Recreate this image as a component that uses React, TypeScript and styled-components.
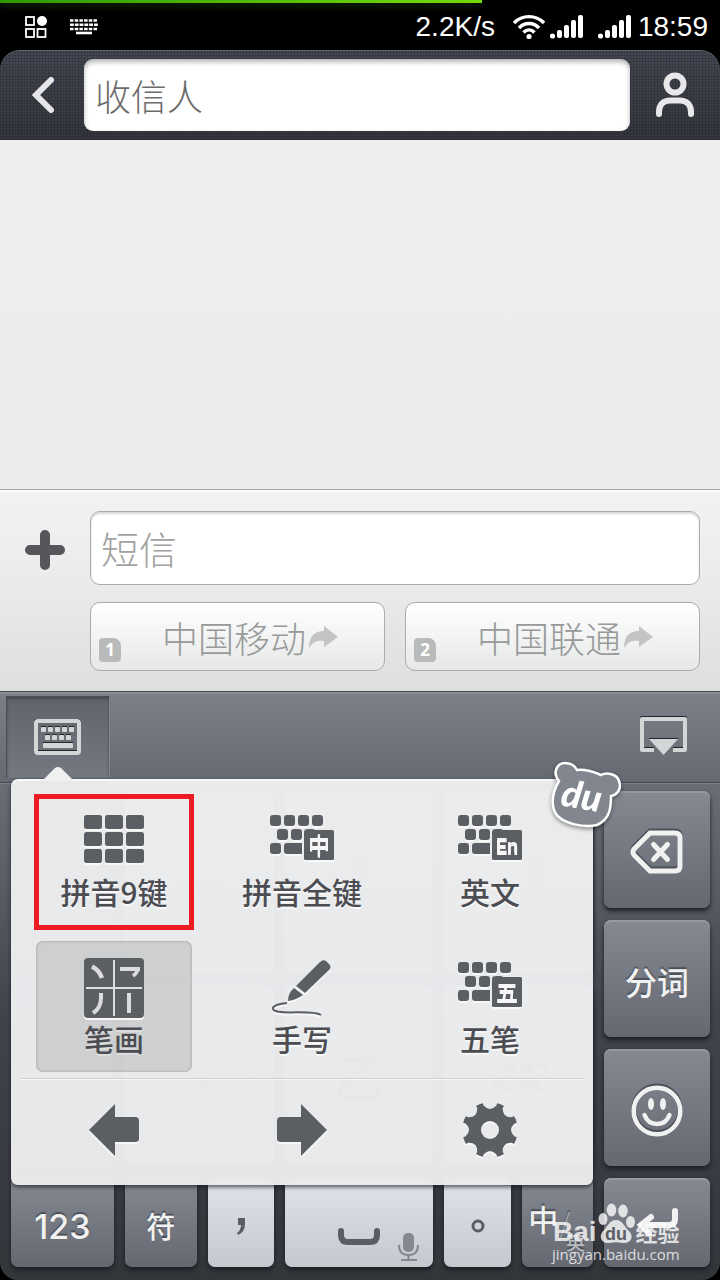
import React from "react";
import styled, { createGlobalStyle, css } from "styled-components";

const GlobalStyle = createGlobalStyle`
  *, *::before, *::after { box-sizing: border-box; }
  body { margin: 0; background: #000; font-family: "Noto Sans CJK SC", sans-serif; }
  button { margin: 0; padding: 0; border: 0; background: none; color: inherit; font-family: inherit; cursor: pointer; }
  input { font-family: inherit; min-width: 0; outline: none; }
  svg { display: block; flex: none; }
`;

const Page = styled.div`
  display: flex;
  flex-direction: column;
  min-height: 100vh;
  overflow: hidden;
`;

/* ---------- status bar ---------- */

const StatusBar = styled.div`
  position: relative;
  display: flex;
  align-items: center;
  justify-content: space-between;
  height: 50px;
  padding: 4px 12px 0 25px;
  background: #000;
  color: #fff;
  font: 400 28px/40px "Liberation Sans", sans-serif;
`;

const Progress = styled.div`
  position: absolute;
  left: 0;
  top: 0;
  width: 67%;
  height: 3px;
  background: linear-gradient(90deg, #2f9800, #74dc0c);
  box-shadow: 0 3px 6px rgba(60, 140, 0, 0.4);
`;

const StatusGroup = styled.div<{ $gap: number }>`
  display: flex;
  align-items: center;
  gap: ${(p) => p.$gap}px;
`;

const Speed = styled.span`
  margin-right: 12px;
`;

/* ---------- header ---------- */

const Header = styled.header`
  display: flex;
  align-items: center;
  height: 90px;
  padding: 1px 0 2px;
  border-top: 1px solid #60646b;
  border-radius: 20px 20px 0 0;
  background:
    repeating-linear-gradient(0deg, rgba(20, 22, 28, 0.22) 0 1px, transparent 1px 3px),
    repeating-linear-gradient(90deg, rgba(20, 22, 28, 0.22) 0 1px, transparent 1px 3px),
    linear-gradient(#444852, #34363c);
`;

const HeaderButton = styled.button<{ $width: number }>`
  display: flex;
  align-items: center;
  justify-content: center;
  width: ${(p) => p.$width}px;
  height: 72px;
`;

const Recipient = styled.input`
  flex: 1;
  height: 72px;
  padding: 0 12px 0 11px;
  border: 0;
  border-radius: 9px;
  background: #fff;
  box-shadow: inset 0 3px 5px rgba(0, 0, 0, 0.3);
  font-size: 36px;
  font-weight: 300;
  &::placeholder { color: #6c6c6c; opacity: 1; }
`;

const Conversation = styled.main`
  flex: 1;
  background: linear-gradient(#efefef, #ebebeb);
`;

/* ---------- composer ---------- */

const Composer = styled.form`
  display: grid;
  grid-template-columns: 90px 1fr;
  row-gap: 17px;
  padding: 21px 20px 20px 0;
  border-top: 1px solid #a6a8a8;
  background: linear-gradient(#f1f3f2, #ececec 40%, #dddfe0);
  box-shadow: inset 0 2px #fafafa;
`;

const AddButton = styled.button`
  display: flex;
  align-items: center;
  justify-content: center;
  padding-top: 4px;
`;

const MessageInput = styled.input`
  height: 74px;
  padding: 0 10px 2px;
  border: 1px solid #a9abac;
  border-radius: 10px;
  background: #fff;
  box-shadow: inset 0 2px 2px rgba(0, 0, 0, 0.15);
  font-size: 38px;
  font-weight: 300;
  &::placeholder { color: #a2a2a2; opacity: 1; }
`;

const SendRow = styled.div`
  grid-column: 2;
  display: grid;
  grid-template-columns: 1fr 1fr;
  gap: 20px;
`;

const SendButton = styled.button`
  display: flex;
  align-items: center;
  height: 69px;
  padding: 0 45px 0 8px;
  border: 1px solid #a9abac;
  border-radius: 10px;
  background: linear-gradient(#fff, #e6e8e7);
  color: #989a9a;
  font-size: 36px;
  font-weight: 300;
  line-height: 48px;
`;

const SendLabel = styled.span`
  flex: 1;
  display: flex;
  align-items: center;
  justify-content: flex-end;
  gap: 3px;
  white-space: nowrap;
`;

const SimBadge = styled.span`
  align-self: flex-end;
  width: 22px;
  height: 24px;
  margin-bottom: 8px;
  border-radius: 4px 8px 4px 4px;
  background: #b9bbbb;
  color: #fff;
  font: 700 17px/24px "Noto Sans", sans-serif;
  text-align: center;
`;

/* ---------- keyboard ---------- */

const Keyboard = styled.section`
  position: relative;
  border-top: 1px solid #484e50;
  border-radius: 0 0 18px 18px;
  background: linear-gradient(#6a6e77 80px, #5b5f68 180px, #41444b 320px, #32353a);
`;

const Toolbar = styled.div`
  display: flex;
  justify-content: space-between;
  height: 91px;
  padding: 2px 28px 4px 6px;
  border-top: 2px solid #879092;
  border-bottom: 1px solid #454951;
  background: linear-gradient(#7b7f87, #656971);
`;

const LayoutTab = styled.button`
  display: flex;
  justify-content: center;
  width: 104px;
  padding: 22px 2px 0 0;
  border: 1px solid #4b5059;
  border-right-color: #80858e;
  border-bottom: 0;
  background: linear-gradient(#60646c, #747881);
  box-shadow: inset 0 2px 3px rgba(50, 53, 60, 0.6);
`;

const HideButton = styled.button`
  display: flex;
  justify-content: center;
  padding-top: 20px;
  width: 56px;
`;

const Board = styled.div`
  display: flex;
  gap: 11px;
  padding: 7px 10px 13px 11px;
  border-top: 1px solid #7c8089;
`;

const MainKeys = styled.div`
  flex: 1;
  display: flex;
  flex-direction: column;
  gap: 12px;
`;

const StrokeKeys = styled.div`
  flex: 1;
  display: grid;
  grid-template-columns: 103fr 149fr 149fr 149fr;
  grid-template-rows: 1fr 1fr;
  gap: 12px 11px;
`;

const PunctuationList = styled.div`
  grid-row: 1 / 3;
  display: grid;
  grid-template-rows: repeat(4, 1fr);
  border-radius: 7px;
  background: #7b7f88;
`;

const BottomKeys = styled.div`
  display: grid;
  grid-template-columns: 103fr 72fr 66fr 149fr 67fr 71fr;
  gap: 11px;
`;

const SideKeys = styled.div`
  display: flex;
  flex-direction: column;
  gap: 12px;
  width: 106px;
`;

const Key = styled.button<{ $light?: boolean; $height?: number; $size?: number }>`
  position: relative;
  display: flex;
  align-items: center;
  justify-content: center;
  min-width: 0;
  ${(p) => p.$height && css`height: ${p.$height}px;`}
  border-radius: 7px;
  font-size: ${(p) => p.$size ?? 32}px;
  font-weight: 500;
  white-space: nowrap;
  ${(p) =>
    p.$light
      ? css`
          color: #5a5d66;
          background: linear-gradient(#e0e3ea, #c5c8cf);
          box-shadow: 0 3px 4px #1d1f23;
        `
      : css`
          color: #f1f1f1;
          background: linear-gradient(#858991, #656870);
          box-shadow: inset 0 2px #9599a2, 0 3px 4px #1d1f23;
          text-shadow: 0 -2px 1px #4c5058;
        `}
`;

const PlainKey = styled.button`
  color: #fff;
  font-size: 32px;
`;

const NumberLabel = styled.span`
  font: 500 34px/40px Inter, sans-serif;
  padding-top: 8px;
`;

const KeyLabel = styled.span`
  padding-top: 4px;
`;

const ModeLabel = styled.span`
  flex: 1;
  display: flex;
  align-items: center;
  height: 80px;
  padding: 0 8px 0 6px;
  font-size: 30px;
  line-height: 30px;
`;

const ModeMain = styled.span`
  padding-bottom: 10px;
`;

const ModeSlash = styled.span`
  margin-right: -4px;
  color: #a4a7ad;
  font-weight: 300;
`;

const ModeAlt = styled.span`
  display: flex;
  align-items: center;
  color: #b9bcc1;
  font-size: 19px;
  line-height: 24px;
  padding-top: 38px;
`;

const MicBadge = styled.span`
  position: absolute;
  right: 14px;
  bottom: 6px;
`;

/* ---------- layout picker ---------- */

const Picker = styled.div`
  position: absolute;
  top: 87px;
  left: 11px;
  right: 127px;
  padding: 15px 9px 0;
  border-top: 2px solid #f8f8f8;
  border-radius: 7px;
  background: linear-gradient(rgba(236, 236, 236, 0.98), rgba(233, 235, 237, 0.98) 50%, rgba(234, 234, 235, 0.98));
  box-shadow: 0 2px 4px rgba(20, 22, 28, 0.7);
  color: #4b4d53;
`;

const Caret = styled.svg`
  position: absolute;
  top: -14px;
  left: 31px;
`;

const Bear = styled.svg`
  position: absolute;
  top: -20px;
  right: -30px;
  filter: drop-shadow(0 2px 2px rgba(0, 0, 0, 0.4));
`;

const LayoutGrid = styled.div`
  display: grid;
  grid-template-columns: repeat(3, 1fr);
  row-gap: 16px;
  padding-bottom: 6px;
  margin-top: -2px;
`;

const LayoutOption = styled.button<{ $selected?: boolean }>`
  position: relative;
  display: flex;
  flex-direction: column;
  align-items: center;
  height: 131px;
  margin: 0 16px;
  padding-top: 15px;
  border-radius: 7px;
  font-size: 30px;
  font-weight: 500;
  line-height: 36px;
  white-space: nowrap;
  text-shadow: 0 2px #f8f8f8;
  ${(p) =>
    p.$selected &&
    css`
      background: rgba(190, 190, 190, 0.6);
      box-shadow: inset 0 0 3px #999;
      text-shadow: 0 2px #dcdcdc;
    `}
`;

const IconBox = styled.span`
  display: flex;
  align-items: center;
  justify-content: center;
  height: 64px;
  filter: drop-shadow(0 2px 0 #f8f8f8);
`;

const Highlight = styled.span`
  position: absolute;
  inset: 0 -2px -5px;
  border: 5px solid #ed1c24;
`;

const PickerFooter = styled.div`
  display: grid;
  grid-template-columns: repeat(3, 1fr);
  height: 107px;
  padding-bottom: 5px;
  border-top: 1px solid #d2d2d2;
  box-shadow: inset 0 1px #f6f6f6;
`;

const FooterButton = styled.button`
  display: flex;
  align-items: center;
  justify-content: center;
  filter: drop-shadow(0 2px 0 #f8f8f8);
`;

/* ---------- watermark ---------- */

const Watermark = styled.div`
  position: absolute;
  right: 38px;
  bottom: 17px;
  width: 130px;
  color: rgba(255, 255, 255, 0.78);
  white-space: nowrap;
  pointer-events: none;
`;

const WatermarkLogo = styled.div`
  display: flex;
  align-items: flex-end;
  gap: 1px;
  padding-left: 1px;
  font: 700 28px/26px "Liberation Sans", sans-serif;
`;

const WatermarkWord = styled.span`
  font: 700 22px/28px "Noto Sans CJK SC", sans-serif;
`;

const WatermarkUrl = styled.div`
  font: 400 15px/18px "Open Sans", sans-serif;
`;

/* ---------- icons ---------- */

const INK = "#5b5e63";

const Signal = () => (
  <svg width="34" height="24" viewBox="0 0 34 24" fill="#fff">
    <circle cx="2.5" cy="21" r="2.6" />
    <rect x="7" y="15" width="5" height="8" rx="2" />
    <rect x="14" y="10" width="5" height="13" rx="2" />
    <rect x="21" y="5" width="5" height="18" rx="2" />
    <rect x="28" y="0" width="5" height="23" rx="2" />
  </svg>
);

const Wifi = () => (
  <svg width="32" height="26" viewBox="0 0 32 26" fill="none" stroke="#fff" strokeWidth="3.4">
    <path d="M1 9C9 0.500 23 0.500 31 9" />
    <path d="M6 14C11.500 8 20.500 8 26 14" />
    <path d="M10.500 18.500C13.800 15 18.200 15 21.500 18.500" />
    <circle cx="16" cy="22.500" r="2.600" fill="#fff" stroke="none" />
  </svg>
);

const AppsIcon = () => (
  <svg width="22" height="22" viewBox="0 0 22 22" fill="none" stroke="#fff" strokeWidth="1.800">
    <rect x="1" y="1" width="8" height="8" />
    <circle cx="17" cy="5" r="5" fill="#fff" stroke="none" />
    <rect x="1" y="13" width="8" height="8" />
    <rect x="12.500" y="13" width="8" height="8" />
  </svg>
);

const MiniKeyboard = () => (
  <svg width="30" height="16" viewBox="0 0 30 16" fill="none" stroke="#fff" strokeWidth="2.600">
    <path d="M1 1.500H29M1 10H29" strokeDasharray="3.500 1.200" />
    <path d="M1 5.700H29" strokeDasharray="3.800 1" />
    <path d="M7 14H23" />
  </svg>
);

const MiniKeys = ({ glyph, latin }: { glyph: string; latin?: boolean }) => (
  <svg width="64" height="52" viewBox="0 0 64 52" fill={INK}>
    {[0, 14, 28, 42].map((x) => (
      <rect key={x} x={x} y="0" width="11" height="11" rx="3" />
    ))}
    <rect x="7" y="14" width="11" height="11" rx="3" />
    <rect x="21" y="14" width="11" height="11" rx="3" />
    <path d="M34 15Q36 14 39 14H43L45 15Z" />
    <rect x="0" y="28" width="11" height="11" rx="3" />
    <path d="M17 28H32V39H17Q14 39 14 36V31Q14 28 17 28Z" />
    <rect x="34" y="15" width="30" height="30" rx="1.500" />
    <text
      x="49"
      y="38"
      fill="#f6f6f6"
      fontSize={latin ? 20 : 22}
      fontWeight={latin ? 600 : 500}
      fontFamily={latin ? "Roboto, sans-serif" : '"Noto Sans CJK SC", sans-serif'}
      textAnchor="middle"
    >
      {glyph}
    </text>
  </svg>
);

const NineKeys = () => (
  <svg width="60" height="52" viewBox="0 0 60 52" fill={INK}>
    {[0, 17, 34].map((y) =>
      [0, 21, 42].map((x) => <rect key={`${x}-${y}`} x={x} y={y} width="18" height="14" rx="2.500" />)
    )}
  </svg>
);

const StrokeIcon = () => (
  <svg width="60" height="60" viewBox="0 0 60 60">
    <rect width="60" height="60" rx="4" fill={INK} />
    <g fill="none" stroke="#dcdcde">
      <path d="M30 2V58M2 30H58" strokeWidth="2" />
      <path d="M8 8.500Q15 12 18 20" strokeWidth="4.500" />
      <path d="M36 11H56" strokeWidth="4" />
      <path d="M54 11Q53 15 49 18" strokeWidth="3.500" />
      <path d="M17 35V40Q17 50 9 55" strokeWidth="4" />
      <path d="M45 35V55" strokeWidth="4" />
    </g>
  </svg>
);

const PenIcon = () => (
  <svg width="60" height="58" viewBox="0 0 60 58">
    <path d="M24 27L48 3Q51 0 54 2L57 5Q60 8 57 11L33 34Z" fill={INK} />
    <path d="M22 29L31 36Q24 41 16 42Q16 34 22 29Z" fill={INK} />
    <path d="M15 44C4 45 0 48 1 50C3 57 40 50 49 56" fill="none" stroke={INK} strokeWidth="2" />
  </svg>
);

const ArrowLeft = () => (
  <svg width="50" height="52" viewBox="0 0 50 52" fill={INK}>
    <path d="M0 26L26 0V13H46Q50 13 50 17V35Q50 38 46 38H26V52Z" />
  </svg>
);

const ArrowRight = () => (
  <svg width="50" height="52" viewBox="0 0 50 52" fill={INK}>
    <path d="M50 26L24 0V13H4Q0 13 0 17V35Q0 38 4 38H24V52Z" />
  </svg>
);

const Gear = () => (
  <svg width="56" height="56" viewBox="-28 -28 56 56">
    <defs>
      <mask id="gear-notches">
        <rect x="-28" y="-28" width="56" height="56" fill="#fff" />
        <circle r="9" fill="#000" />
        {[0, 45, 90, 135, 180, 225, 270, 315].map((a) => (
          <path key={a} d="M-7.500 -29L-6.500 -24.500Q0 -17.500 6.500 -24.500L7.500 -29Z" fill="#000" transform={`rotate(${a})`} />
        ))}
      </mask>
    </defs>
    <circle r="27.800" fill={INK} mask="url(#gear-notches)" />
  </svg>
);

const SendArrow = () => (
  <svg width="30" height="24" viewBox="0 0 30 24" fill="#c3c4c4">
    <path d="M0 23C0 11 6 6 15 6V1L29 12L15 22V16C8 15 4 17 0 23Z" />
  </svg>
);

const BaiduBear = () => (
  <Bear width="72" height="70" viewBox="0 0 72 70" aria-hidden="true">
    <path
      d="M8 20C1 12 6 2 14 2C20 2 24 5 26 9C34 8 43 11 50 14C56 11 66 13 68 20C71 28 66 34 60 35C60 47 59 58 46 64C34 67 12 63 5 53C-1 43 2 30 8 20Z"
      fill="#82868e"
      stroke="#fff"
      strokeWidth="2.500"
    />
    <text
      x="30"
      y="48"
      fill="#fff"
      fontFamily="Lato, sans-serif"
      fontSize="37"
      fontWeight="900"
      fontStyle="italic"
      textAnchor="middle"
      transform="rotate(10 31 40)"
    >
      du
    </text>
  </Bear>
);

const Paw = () => (
  <svg width="37" height="42" viewBox="0 0 37 42" fill="currentColor">
    <ellipse cx="5" cy="16" rx="4.500" ry="6" />
    <ellipse cx="13.500" cy="7" rx="4.800" ry="6.500" />
    <ellipse cx="25" cy="8" rx="4.800" ry="6.500" />
    <ellipse cx="32.500" cy="19" rx="4.500" ry="6" />
    <path d="M18 17C25 17 26 24 31 28C37 34 32 41 25 40C20 39 16 39 11 40C4 41 0 34 5 28C10 24 11 17 18 17Z" />
    <text
      x="18"
      y="37"
      fill="#5a5d64"
      fontFamily='"Liberation Sans", sans-serif'
      fontSize="18"
      fontWeight="700"
      textAnchor="middle"
    >
      du
    </text>
  </svg>
);

const Stroke = ({ d }: { d: string }) => (
  <svg width="52" height="52" viewBox="0 0 52 52" fill="none" stroke="#8a8d94" strokeWidth="7">
    <path d={d} />
  </svg>
);

const strokes = [
  { name: "横", label: <Stroke d="M4 30H48" /> },
  { name: "竖", label: <Stroke d="M26 2V50" /> },
  { name: "撇", label: <Stroke d="M42 2V20Q40 42 22 50" /> },
  { name: "点", label: <Stroke d="M14 14Q28 24 32 38" /> },
  { name: "折", label: "乙" },
  { name: "通配", label: "通配" },
];
const marks = ["?", "!", "~", "……"];

const carriers = [
  { sim: 1, name: "中国移动" },
  { sim: 2, name: "中国联通" },
];

const layouts = [
  { name: "拼音9键", icon: <NineKeys />, highlighted: true },
  { name: "拼音全键", icon: <MiniKeys glyph="中" /> },
  { name: "英文", icon: <MiniKeys glyph="En" latin /> },
  { name: "笔画", icon: <StrokeIcon />, selected: true },
  { name: "手写", icon: <PenIcon /> },
  { name: "五笔", icon: <MiniKeys glyph="五" /> },
];

export default function App() {
  return (
    <Page>
      <GlobalStyle />
      <StatusBar>
        <Progress />
        <StatusGroup $gap={22}>
          <AppsIcon />
          <MiniKeyboard />
        </StatusGroup>
        <StatusGroup $gap={6}>
          <Speed>2.2K/s</Speed>
          <StatusGroup $gap={5}>
            <Wifi />
            <StatusGroup $gap={14}>
              <Signal />
              <Signal />
            </StatusGroup>
          </StatusGroup>
          <span>18:59</span>
        </StatusGroup>
      </StatusBar>

      <Header>
        <HeaderButton $width={84} type="button" aria-label="返回">
          <svg width="24" height="36" viewBox="0 0 24 36" fill="none">
            <path d="M21 3L6 18L21 33" stroke="#e6e6e8" strokeWidth="6" strokeLinecap="round" />
          </svg>
        </HeaderButton>
        <Recipient placeholder="收信人" aria-label="收信人" />
        <HeaderButton $width={90} type="button" aria-label="联系人">
          <svg width="38" height="46" viewBox="0 0 38 46" fill="none" stroke="#e8e8ea" strokeWidth="6">
            <circle cx="19" cy="12" r="8.500" />
            <path d="M3 42V40C3 32 8 28.500 14 28.500H24C30 28.500 35 32 35 40V42" strokeLinecap="round" />
          </svg>
        </HeaderButton>
      </Header>

      <Conversation />

      <Composer onSubmit={(e) => e.preventDefault()}>
        <AddButton type="button" aria-label="添加附件">
          <svg width="40" height="40" viewBox="0 0 40 40" stroke="#55575b" strokeWidth="10" strokeLinecap="round">
            <path d="M20 5V35M5 20H35" />
          </svg>
        </AddButton>
        <MessageInput placeholder="短信" aria-label="短信" />
        <SendRow>
          {carriers.map((c) => (
            <SendButton key={c.sim} type="submit">
              <SimBadge>{c.sim}</SimBadge>
              <SendLabel>
                {c.name}
                <SendArrow />
              </SendLabel>
            </SendButton>
          ))}
        </SendRow>
      </Composer>

      <Keyboard>
        <Toolbar>
          <LayoutTab type="button" aria-label="键盘布局">
            <svg width="47" height="36" viewBox="0 0 47 36">
              <rect x="2" y="1" width="43" height="32" rx="2" fill="none" stroke="#23252a" strokeWidth="4" />
              <rect x="2" y="2" width="43" height="32" rx="2" fill="none" stroke="#d4d5d7" strokeWidth="4" />
              <g fill="#d4d5d7" stroke="none">
                {[7, 14, 21, 28, 35].map((x) => (
                  <rect key={x} x={x} y="8" width="5" height="5" rx="1" />
                ))}
                {[11, 18, 25, 32].map((x) => (
                  <rect key={x} x={x} y="16" width="5" height="5" rx="1" />
                ))}
                <rect x="9" y="24" width="30" height="5" rx="1" />
              </g>
              <path d="M7 7.500H12M14 7.500H19M21 7.500H26M28 7.500H33M35 7.500H40M11 15.500H16M18 15.500H23M25 15.500H30M32 15.500H37M9 23.500H39" stroke="#23252a" />
            </svg>
          </LayoutTab>
          <HideButton type="button" aria-label="收起键盘">
            <svg width="48" height="40" viewBox="0 0 48 40">
              <path d="M14 33H2V2H45V33H33" fill="none" stroke="#23252a" strokeWidth="4" strokeLinejoin="round" />
              <path d="M14 34H2V3H45V34H33" fill="none" stroke="#d4d5d7" strokeWidth="4" strokeLinejoin="round" />
              <path d="M9 22H38V23H9Z" fill="#23252a" />
              <path d="M9 23H38L23.500 39Z" fill="#d4d5d7" />
            </svg>
          </HideButton>
        </Toolbar>

        <Board>
          <MainKeys>
            <StrokeKeys>
              <PunctuationList>
                {marks.map((m) => (
                  <PlainKey key={m} type="button">{m}</PlainKey>
                ))}
              </PunctuationList>
              {strokes.map((s) => (
                <Key key={s.name} type="button" $light $size={s.name.length > 1 ? 30 : 52} aria-label={s.name}>
                  {s.label}
                </Key>
              ))}
            </StrokeKeys>
            <BottomKeys>
              <Key type="button" $height={89}>
                <NumberLabel>123</NumberLabel>
              </Key>
              <Key type="button" $size={29}>
                <KeyLabel>符</KeyLabel>
              </Key>
              <Key type="button" $light aria-label="逗号">
                <svg width="10" height="26" viewBox="0 0 10 26" fill="#5a5d66">
                  <path d="M2 8H9V14Q9 22 2 25L1 23Q5 20 5 15H2Z" />
                </svg>
              </Key>
              <Key type="button" $light aria-label="空格">
                <svg width="42" height="46" viewBox="0 0 42 46" fill="none">
                  <path d="M3 31V35Q3 42 10 42H32Q39 42 39 35V31" stroke="#5a5d66" strokeWidth="6" strokeLinecap="round" />
                </svg>
                <MicBadge>
                  <svg width="21" height="28" viewBox="0 0 21 28" fill="none" stroke="#85888c" strokeWidth="2">
                    <rect x="5" y="0" width="11" height="19" rx="5" fill="#85888c" stroke="none" />
                    <path d="M1 12Q1 22 10.500 22T20 12M10.500 22V26M3 27H19" />
                  </svg>
                </MicBadge>
              </Key>
              <Key type="button" $light aria-label="句号">
                <svg width="14" height="20" viewBox="0 0 14 20" fill="none">
                  <circle cx="7" cy="13" r="5" stroke="#5a5d66" strokeWidth="3" />
                </svg>
              </Key>
              <Key type="button" aria-label="中英切换">
                <ModeLabel>
                  <ModeMain>中</ModeMain>
                  <ModeSlash>/</ModeSlash>
                  <ModeAlt>英</ModeAlt>
                </ModeLabel>
              </Key>
            </BottomKeys>
          </MainKeys>

          <SideKeys>
            <Key type="button" $height={117} aria-label="删除">
              <svg width="54" height="50" viewBox="0 0 54 50" fill="none">
                <path d="M20 8H45Q50 8 50 13V41Q50 46 45 46H20L4 30Q2 27 4 24Z" stroke="#4c5058" strokeWidth="5" transform="translate(0 -2)" />
                <path d="M20 8H45Q50 8 50 13V41Q50 46 45 46H20L4 30Q2 27 4 24Z" stroke="#f1f1f1" strokeWidth="5" />
                <path d="M23.500 19.500L37.500 34.500M37.500 19.500L23.500 34.500" stroke="#f1f1f1" strokeWidth="5" strokeLinecap="round" />
              </svg>
            </Key>
            <Key type="button" $height={117}>
              <KeyLabel>分词</KeyLabel>
            </Key>
            <Key type="button" $height={117} aria-label="表情">
              <svg width="52" height="58" viewBox="0 0 52 58" fill="none" stroke="#f1f1f1" strokeWidth="4.500">
                <circle cx="26" cy="30" r="23.300" stroke="#4c5058" />
                <circle cx="26" cy="32" r="23.300" />
                <ellipse cx="20" cy="25" rx="3" ry="6" fill="#f1f1f1" stroke="none" />
                <ellipse cx="32" cy="25" rx="3" ry="6" fill="#f1f1f1" stroke="none" />
                <path d="M13.500 36Q17 45 26 45T38.500 36" strokeLinecap="round" />
              </svg>
            </Key>
            <Key type="button" $height={89} aria-label="换行">
              <svg width="46" height="34" viewBox="0 0 46 34" fill="none" stroke="#f1f1f1" strokeWidth="6" strokeLinecap="round">
                <path d="M41 5V13Q41 19 35 19H8M17 11L7 19L15 27" />
              </svg>
            </Key>
          </SideKeys>
        </Board>

        <Picker>
          <Caret width="32" height="14" viewBox="0 0 32 14">
            <path d="M0 14L13 1Q16 -1 19 1L32 14Z" fill="#f0f0f0" />
          </Caret>
          <LayoutGrid>
            {layouts.map((l) => (
              <LayoutOption key={l.name} type="button" $selected={l.selected}>
                <IconBox>{l.icon}</IconBox>
                {l.name}
                {l.highlighted && <Highlight />}
              </LayoutOption>
            ))}
          </LayoutGrid>
          <PickerFooter>
            <FooterButton type="button" aria-label="光标左移"><ArrowLeft /></FooterButton>
            <FooterButton type="button" aria-label="光标右移"><ArrowRight /></FooterButton>
            <FooterButton type="button" aria-label="设置"><Gear /></FooterButton>
          </PickerFooter>
          <BaiduBear />
        </Picker>

        <Watermark>
          <WatermarkLogo>
            Bai
            <Paw />
            <WatermarkWord>经验</WatermarkWord>
          </WatermarkLogo>
          <WatermarkUrl>jingyan.baidu.com</WatermarkUrl>
        </Watermark>
      </Keyboard>
    </Page>
  );
}
